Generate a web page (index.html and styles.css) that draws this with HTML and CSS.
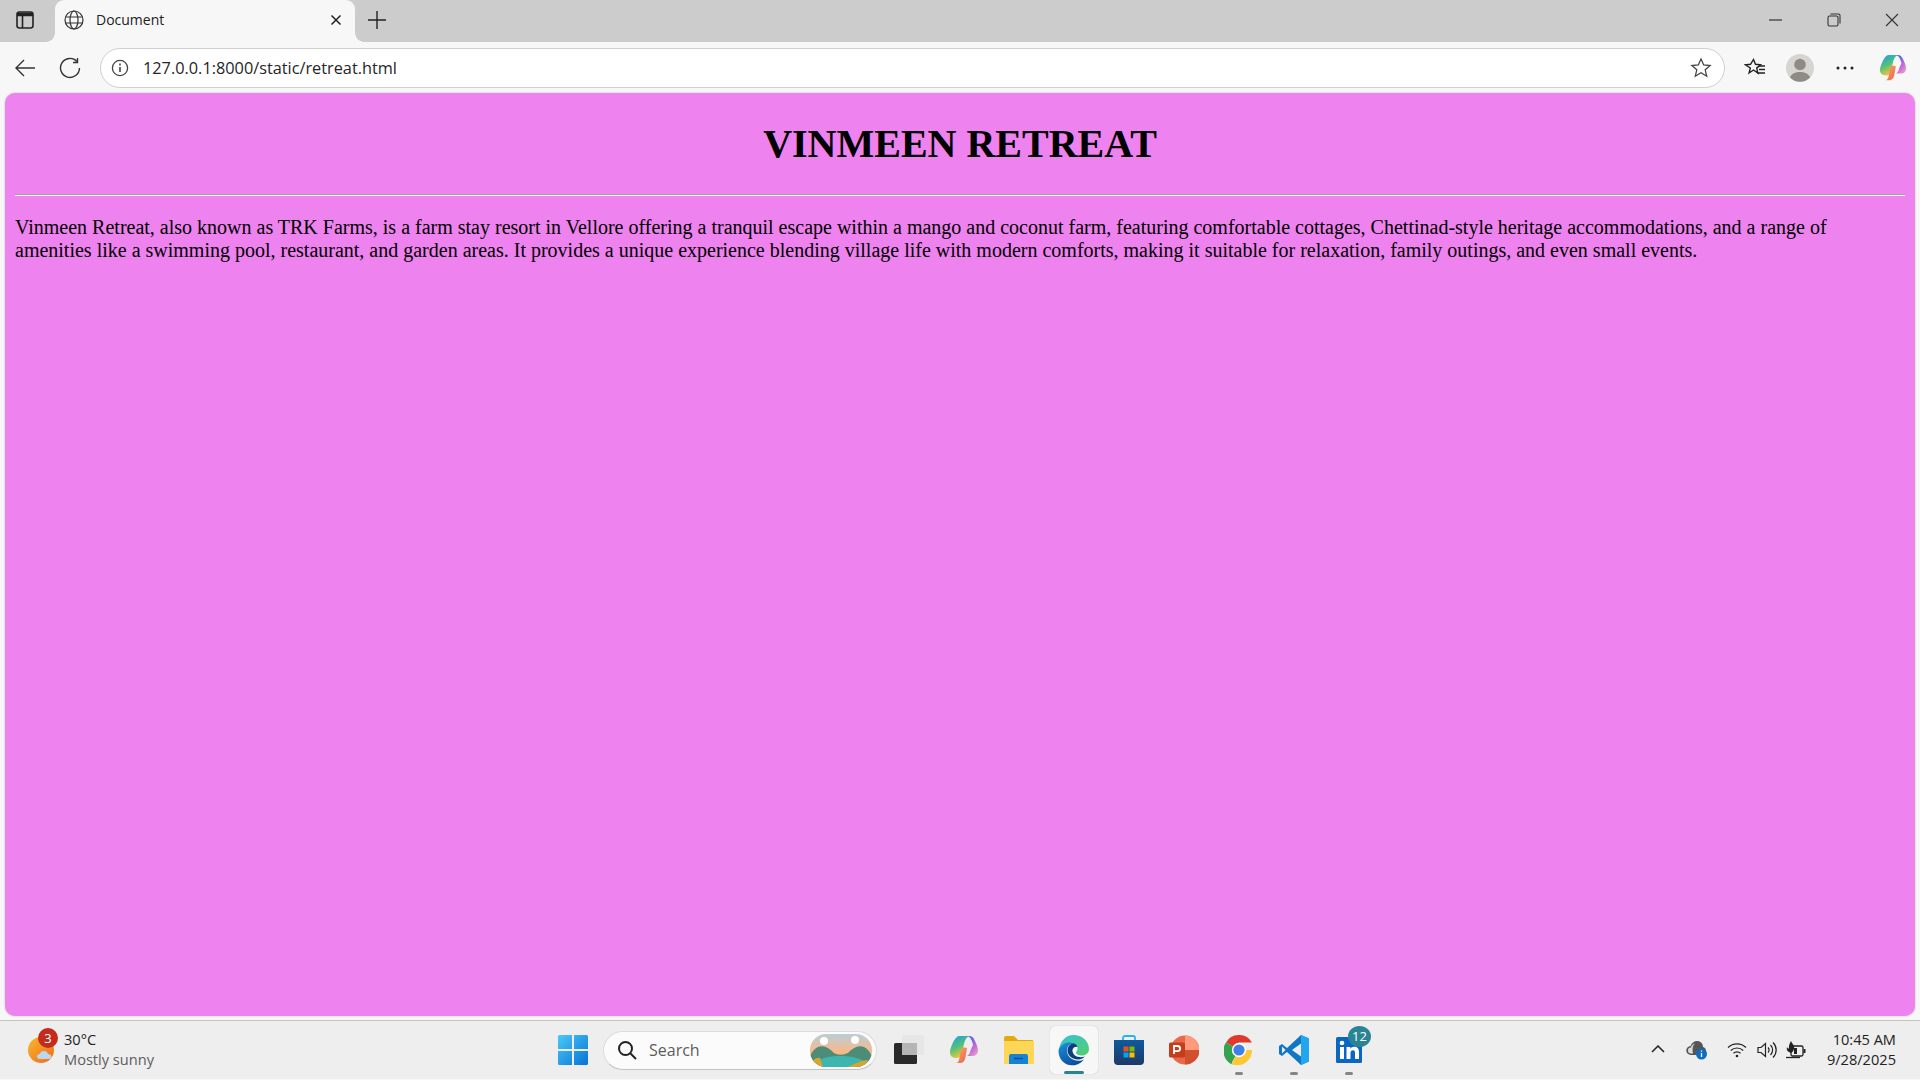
FILE: index.html
```html
<!DOCTYPE html>
<html lang="en">
<head>
  <meta charset="UTF-8">
  <title>Document</title>
  <link rel="stylesheet" href="styles.css">
</head>
<body>
  <div class="tabstrip">
    <svg class="sidebar-icon" width="20" height="20" viewBox="0 0 20 20" fill="none" stroke="#222" stroke-width="1.6"><rect x="2" y="2" width="16" height="16" rx="2.5"/><path d="M2 4.5h16" stroke-width="3.5"/><path d="M7.5 6v12"/></svg>
    <div class="tab">
      <svg width="20" height="20" viewBox="0 0 20 20" fill="none" stroke="#333" stroke-width="1.2"><circle cx="10" cy="10" r="9"/><ellipse cx="10" cy="10" rx="4" ry="9"/><path d="M1.6 7h16.8M1.6 13h16.8"/></svg>
      <span class="tab-title">Document</span>
      <svg class="tab-close" width="12" height="12" viewBox="0 0 12 12" stroke="#222" stroke-width="1.5"><path d="M1.5 1.5l9 9M10.5 1.5l-9 9"/></svg>
    </div>
    <svg class="new-tab" width="18" height="18" viewBox="0 0 18 18" stroke="#222" stroke-width="1.4"><path d="M9 0v18M0 9h18"/></svg>
    <div class="window-controls">
      <svg width="14" height="14" viewBox="0 0 14 14" stroke="#333" stroke-width="1.2"><path d="M0 7h13"/></svg>
      <svg width="14" height="14" viewBox="0 0 14 14" fill="none" stroke="#333" stroke-width="1.1"><rect x="1" y="3" width="10" height="10" rx="1.5"/><path d="M3.5 1h8a1.5 1.5 0 0 1 1.5 1.5v8"/></svg>
      <svg width="14" height="14" viewBox="0 0 14 14" stroke="#333" stroke-width="1.1"><path d="M1 1l12 12M13 1L1 13"/></svg>
    </div>
  </div>

  <div class="toolbar">
    <svg width="22" height="22" viewBox="0 0 22 22" fill="none" stroke="#333" stroke-width="1.4"><path d="M21 11H2M10 3l-8 8 8 8"/></svg>
    <svg class="reload" width="22" height="22" viewBox="0 0 22 22" fill="none" stroke="#333" stroke-width="1.4"><path d="M18 4.5A9.5 9.5 0 1 0 20.5 11"/><path d="M18.5 1v4.5H14"/></svg>
    <div class="address">
      <svg width="18" height="18" viewBox="0 0 18 18" fill="none" stroke="#444" stroke-width="1.3"><circle cx="9" cy="9" r="7.6"/><path d="M9 8v5" stroke-width="1.6"/><path d="M9 4.6v1.8" stroke-width="1.6"/></svg>
      <span class="url">127.0.0.1:8000/static/retreat.html</span>
      <svg class="star" width="22" height="22" viewBox="0 0 22 22" fill="none" stroke="#444" stroke-width="1.3"><path d="M11 2l2.7 6 6.4.6-4.900 4.200 1.500 6.400L11 15.800l-5.700 3.400 1.500-6.400L1.900 8.600 8.300 8z"/></svg>
    </div>
    <svg class="fav" width="22" height="22" viewBox="0 0 22 22" fill="none" stroke="#222" stroke-width="1.4"><path d="M9.5 2.500l2 4.800 5 .5-3.800 3.300 1.200 5L9.500 13l-4.400 3 1.200-5L1.500 7.800l5-.5z"/><path d="M15 9h6M15 12.500h6M13.500 16h7.500"/></svg>
    <svg class="avatar" width="28" height="28" viewBox="0 0 28 28"><circle cx="14" cy="14" r="14" fill="#d6d5d1"/><circle cx="14" cy="10.5" r="5.8" fill="#8e8b87"/><path d="M4 23.500c1.500-4 5.500-5.500 10-5.500s8.500 1.500 10 5.500a14 14 0 0 1-20 0z" fill="#8e8b87"/></svg>
    <svg class="dots" width="18" height="4" viewBox="0 0 18 4" fill="#222"><circle cx="2" cy="2" r="1.5"/><circle cx="9" cy="2" r="1.5"/><circle cx="16" cy="2" r="1.5"/></svg>
    <svg class="copilot" width="28" height="28" viewBox="0 0 30 30">
      <defs>
        <linearGradient id="cop1" x1="0" y1="0" x2="0.4" y2="1"><stop offset="0" stop-color="#1e9bf0"/><stop offset="0.55" stop-color="#4fc27a"/><stop offset="1" stop-color="#f2c53d"/></linearGradient>
        <linearGradient id="cop2" x1="0.2" y1="0" x2="0.8" y2="1"><stop offset="0" stop-color="#3a5ff0"/><stop offset="0.6" stop-color="#c46ad8"/><stop offset="1" stop-color="#e9a0c8"/></linearGradient>
        <linearGradient id="cop3" x1="0" y1="0" x2="1" y2="1"><stop offset="0" stop-color="#f7b24a"/><stop offset="1" stop-color="#ef5a63"/></linearGradient>
      </defs>
      <path d="M10 1h10c-2 1-3.500 3-4.500 6l-3 12c-.7 2.500-2 4-5 4C3 23 1 20.500 1 17.500 1 13 6 1 10 1z" fill="url(#cop1)"/>
      <path d="M18 1h2c2.500 0 4.500 1.500 5.500 4 1.500 3 3.500 7 3.500 10.500 0 3-2 5.500-5 5.500h-6c2-1 3-3 3.500-5.500L24 10c-1-5-3-9-6-9z" fill="url(#cop2)"/>
      <path d="M11 19l2-7 5 1-1.500 9c-.5 3-2 6-5 6H7c3 0 3.500-5 4-9z" fill="url(#cop3)"/>
    </svg>
  </div>

  <main class="viewport">
    <div class="page">
      <h1>VINMEEN RETREAT</h1>
      <hr>
      <p>Vinmeen Retreat, also known as TRK Farms, is a farm stay resort in Vellore offering a tranquil escape within a mango and coconut farm, featuring comfortable cottages, Chettinad-style heritage accommodations, and a range of amenities like a swimming pool, restaurant, and garden areas. It provides a unique experience blending village life with modern comforts, making it suitable for relaxation, family outings, and even small events.</p>
    </div>
  </main>

  <footer class="taskbar">
    <div class="weather">
      <div class="weather-icon">
        <svg width="30" height="30" viewBox="0 0 30 30">
          <defs><linearGradient id="sun" x1="0" y1="0" x2="1" y2="1"><stop offset="0" stop-color="#f6b92c"/><stop offset="1" stop-color="#ee6a1f"/></linearGradient></defs>
          <circle cx="14" cy="15" r="13" fill="url(#sun)"/>
          <path d="M13 24c-2 0-3-1-3-2.500s1.200-2.500 2.800-2.500c.7-2 2.200-3 4.200-3s3.500 1.200 4 3c2 0 3.500 1.200 3.500 2.700S23 24 21 24z" fill="#bcd6f2"/>
        </svg>
        <span class="weather-badge">3</span>
      </div>
      <div class="weather-text">
        <div class="temp">30°C</div>
        <div class="sky">Mostly sunny</div>
      </div>
    </div>

    <div class="task-icons">
      <svg class="start" width="30" height="30" viewBox="0 0 30 30">
        <defs><linearGradient id="win" x1="0" y1="0" x2="1" y2="1"><stop offset="0" stop-color="#4cc8f8"/><stop offset="1" stop-color="#0673d4"/></linearGradient></defs>
        <path d="M0 1.500A1.500 1.500 0 0 1 1.500 0H14v14H0zM16 0h12.500A1.500 1.500 0 0 1 30 1.500V14H16zM0 16h14v14H1.500A1.500 1.500 0 0 1 0 28.500zM16 16h14v12.500a1.500 1.500 0 0 1-1.500 1.500H16z" fill="url(#win)"/>
      </svg>
      <div class="search">
        <svg width="20" height="20" viewBox="0 0 20 20" fill="none" stroke="#222" stroke-width="2"><circle cx="8.5" cy="8.5" r="6.5"/><path d="M13.500 13.500L19 19"/></svg>
        <span class="search-label">Search</span>
        <svg class="search-art" width="62" height="33" viewBox="0 0 62 33">
          <defs>
            <linearGradient id="sky" x1="0" y1="0" x2="0" y2="1"><stop offset="0" stop-color="#b8cfd8"/><stop offset="0.5" stop-color="#f6b98f"/><stop offset="1" stop-color="#f9a95f"/></linearGradient>
            <clipPath id="pill"><rect x="0" y="0" width="62" height="33" rx="16"/></clipPath>
          </defs>
          <g clip-path="url(#pill)">
            <rect width="62" height="33" fill="url(#sky)"/>
            <circle cx="14" cy="7" r="4" fill="#fff"/><circle cx="45" cy="6" r="4" fill="#fff"/>
            <path d="M0 22c6-12 14-12 22-5 3 5 14 5 18 0 8-7 16-7 22 5v11H0z" fill="#4d8c76"/>
            <path d="M0 33c6-9 20-11 30-11s24 2 32 11z" fill="#3fb5b0"/>
            <path d="M0 32c2-6 6-9 10-8l3 9zM38 33c6-3 14-7 20-7l-4 7z" fill="#d9a52b"/>
          </g>
        </svg>
      </div>
      <svg class="task-view" width="30" height="30" viewBox="0 0 30 30"><rect x="0" y="8" width="23" height="21" rx="1.5" fill="#2a2a2a"/><rect x="8" y="0" width="22" height="20" rx="1.5" fill="#e4e4e4" opacity="0.85"/><rect x="8" y="8" width="15" height="12" fill="#b5b5b5"/></svg>
      <span class="app">
        <svg width="30" height="30" viewBox="0 0 30 30">
          <defs>
            <linearGradient id="cop4" x1="0" y1="0" x2="0.4" y2="1"><stop offset="0" stop-color="#1e9bf0"/><stop offset="0.55" stop-color="#4fc27a"/><stop offset="1" stop-color="#f2c53d"/></linearGradient>
            <linearGradient id="cop5" x1="0.2" y1="0" x2="0.8" y2="1"><stop offset="0" stop-color="#3a5ff0"/><stop offset="0.6" stop-color="#c46ad8"/><stop offset="1" stop-color="#e9a0c8"/></linearGradient>
            <linearGradient id="cop6" x1="0" y1="0" x2="1" y2="1"><stop offset="0" stop-color="#f7b24a"/><stop offset="1" stop-color="#ef5a63"/></linearGradient>
          </defs>
          <path d="M10 1h10c-2 1-3.500 3-4.500 6l-3 12c-.7 2.500-2 4-5 4C3 23 1 20.500 1 17.500 1 13 6 1 10 1z" fill="url(#cop4)"/>
          <path d="M18 1h2c2.500 0 4.500 1.500 5.500 4 1.500 3 3.500 7 3.500 10.500 0 3-2 5.500-5 5.500h-6c2-1 3-3 3.500-5.500L24 10c-1-5-3-9-6-9z" fill="url(#cop5)"/>
          <path d="M11 19l2-7 5 1-1.500 9c-.5 3-2 6-5 6H7c3 0 3.500-5 4-9z" fill="url(#cop6)"/>
        </svg>
      </span>
      <span class="app">
        <svg width="32" height="30" viewBox="0 0 32 30">
          <path d="M1 3a2 2 0 0 1 2-2h8l4 4h15v6H1z" fill="#e3a90f"/>
          <path d="M1 6h29a1 1 0 0 1 1 1v21a1 1 0 0 1-1 1H2a1 1 0 0 1-1-1z" fill="#fcd757"/>
          <path d="M6 21a2 2 0 0 1 2-2h15a2 2 0 0 1 2 2v8H6z" fill="#1682d4"/>
          <path d="M11 23.500h9" stroke="#0c4f90" stroke-width="1.5"/>
        </svg>
      </span>
      <span class="app app-active">
        <svg width="31" height="31" viewBox="0 0 31 31">
          <defs>
            <linearGradient id="edge1" x1="0" y1="0" x2="1" y2="1"><stop offset="0" stop-color="#36c0d8"/><stop offset="1" stop-color="#54d06a"/></linearGradient>
            <linearGradient id="edge2" x1="0" y1="0" x2="0.6" y2="1"><stop offset="0" stop-color="#1992dd"/><stop offset="1" stop-color="#0b4e9a"/></linearGradient>
          </defs>
          <path d="M15.500 0C24 0 31 6 31 14c0 4-3 6.500-7 6.500-3 0-6-1-6-3 0-1 1.500-1.500 1.500-4 0-3-3-5.500-7-5.500-5 0-9 3-11.500 7C2 6 8 0 15.500 0z" fill="url(#edge1)"/>
          <path d="M.5 15c2-5 6.500-7.500 11-7.500 1.500 0 2.500.3 3.500.8-4 .7-6.500 4-6 8 .6 6 6 9.500 11 9.500 2.500 0 4.500-.5 6-1.500-2.500 3.500-6.500 6-11 6C7 31 0 24 .5 15z" fill="url(#edge2)"/>
          <path d="M15 8.300c-3 .7-5.500 3.500-5.500 7.200 0 5 5 9 10.500 9 3 0 5-1 7-3-2 .6-4 1-6 .6-3.500-.5-6-2.800-6.500-5.600-.3-2 .5-3.200 1.500-4 1-.7 2.500-.5 3.500-1-1-1.800-2.500-3-4.500-3.200z" fill="#0a3f80"/>
        </svg>
        <span class="run-active"></span>
      </span>
      <span class="app">
        <svg width="30" height="30" viewBox="0 0 30 30">
          <defs><linearGradient id="store" x1="0" y1="0" x2="0" y2="1"><stop offset="0" stop-color="#0f5a9e"/><stop offset="1" stop-color="#1d3a66"/></linearGradient></defs>
          <path d="M9 6V3a2 2 0 0 1 2-2h8a2 2 0 0 1 2 2v3" fill="none" stroke="#25b4e8" stroke-width="1.8"/>
          <path d="M0 5h30v21a4 4 0 0 1-4 4H4a4 4 0 0 1-4-4z" fill="url(#store)"/>
          <rect x="9.500" y="11.500" width="5" height="5" fill="#e8501f"/><rect x="15.500" y="11.500" width="5" height="5" fill="#7fba00"/>
          <rect x="9.500" y="17.500" width="5" height="5" fill="#01a4ef"/><rect x="15.500" y="17.500" width="5" height="5" fill="#ffb900"/>
        </svg>
      </span>
      <span class="app">
        <svg width="30" height="30" viewBox="0 0 30 30">
          <circle cx="16" cy="15" r="14.5" fill="#e8694a"/>
          <path d="M16 .5A14.500 14.500 0 0 1 30.500 15H16z" fill="#ff9a7c"/>
          <path d="M16 15h14.500A14.500 14.500 0 0 1 16 29.500z" fill="#d2502f"/>
          <rect x="0" y="7.500" width="16" height="15" rx="1.5" fill="#c43e1c"/>
          <path d="M5 19V11h3.500a2.600 2.600 0 0 1 0 5.200H5" fill="none" stroke="#fff" stroke-width="1.8"/>
        </svg>
      </span>
      <span class="app">
        <svg width="30" height="30" viewBox="0 0 30 30">
          <path d="M15 15L2 7.500A15 15 0 0 1 28 7.500H15z" fill="#e0392c"/>
          <path d="M15 15l-6.500 11.300-1 3A15 15 0 0 1 2 7.500z" fill="#34a24f"/>
          <path d="M15 15h13a15 15 0 0 1-20.500 14.300z" fill="#fcc934"/>
          <circle cx="15" cy="15" r="7.2" fill="#fff"/>
          <circle cx="15" cy="15" r="5.6" fill="#3f7fe8"/>
        </svg>
        <span class="run-dot"></span>
      </span>
      <span class="app">
        <svg width="30" height="30" viewBox="0 0 30 30">
          <path d="M22 0l8 3.500v23L22 30 8 17l-5 4-3-2v-8l3-2 5 4z" fill="#0f77c4"/>
          <path d="M22 0l8 3.500v23L22 30z" fill="#22a6f0"/>
          <path d="M22 8.500L13 15l9 6.500z" fill="#eeeeee"/>
          <path d="M3 11.500L6.500 15 3 18.500z" fill="#eeeeee"/>
        </svg>
        <span class="run-dot"></span>
      </span>
      <span class="app app-linkedin">
        <svg width="26" height="26" viewBox="0 0 26 26">
          <rect width="26" height="26" rx="1.5" fill="#0b66c2"/>
          <rect x="4" y="10" width="4" height="12" fill="#fff"/><circle cx="6" cy="6" r="2.3" fill="#fff"/>
          <path d="M10.500 10h3.800v1.800c.7-1.200 2-2.100 4-2.100 3.600 0 4.700 2.200 4.700 5.800V22h-4v-5.800c0-1.700-.4-3-2-3s-2.500 1.300-2.500 3V22h-4z" fill="#fff"/>
        </svg>
        <span class="count-badge">12</span>
        <span class="run-dot"></span>
      </span>
    </div>

    <div class="tray">
      <svg class="chevron" width="14" height="8" viewBox="0 0 14 8" fill="none" stroke="#222" stroke-width="1.5"><path d="M1 7l6-6 6 6"/></svg>
      <span class="tray-cloud">
        <svg width="22" height="20" viewBox="0 0 22 20"><path d="M5 15a4.500 4.500 0 0 1-.5-9C5.500 3 8 1 11 1c3.500 0 6 2.500 6 6 2 .5 3 2 3 4s-1.500 4-3.500 4z" fill="#555"/><path d="M5 13.500a3 3 0 0 1 0-6c.5-2 2-3.500 4-4-2 1.500-3 5-2 10z" fill="#ddd"/><circle cx="15.5" cy="14" r="5.5" fill="#0f6cbd"/><path d="M15.500 13v4M15.500 10.500v1.200" stroke="#fff" stroke-width="1.3"/></svg>
      </span>
      <svg class="tray-wifi" width="20" height="16" viewBox="0 0 20 16" fill="none" stroke="#222" stroke-width="1.2"><path d="M1 5.500a13 13 0 0 1 18 0M3.800 8.500a9 9 0 0 1 12.400 0M6.500 11.300a5 5 0 0 1 7 0"/><circle cx="10" cy="14" r="1.3" fill="#222" stroke="none"/></svg>
      <svg class="tray-sound" width="20" height="18" viewBox="0 0 20 18" fill="none" stroke="#222" stroke-width="1.2"><path d="M1 6.500v5h3l4.500 4V2.500L4 6.500z"/><path d="M11 6.500a3.500 3.500 0 0 1 0 5M13.500 4a7 7 0 0 1 0 10M16 1.500a10.500 10.500 0 0 1 0 15"/></svg>
      <svg class="tray-battery" width="20" height="18" viewBox="0 0 20 18"><rect x="5" y="5" width="12" height="10" rx="1.5" fill="none" stroke="#222" stroke-width="1.3"/><rect x="17.5" y="8" width="2" height="4" rx="0.5" fill="#222"/><path d="M5 0c1 3 4 4 3 8-.5 2-1.500 3-3 4C2 11 0 9 1 6c.5 1 1 1.500 2 1.500C2.500 4 4 2 5 0z" fill="#222"/><path d="M0 16.500h14" stroke="#222" stroke-width="1.3"/><rect x="8" y="7" width="3" height="6" fill="#222"/></svg>
      <div class="clock">
        <div>10:45 AM</div>
        <div>9/28/2025</div>
      </div>
    </div>
  </footer>
</body>
</html>
```

FILE: styles.css
```css
html, body {
  height: 100%;
}
body {
  margin: 0;
  display: flex;
  flex-direction: column;
  height: 1080px;
  overflow: hidden;
  background-color: #f7f7f7;
  font-family: "Open Sans", "Noto Sans", sans-serif;
  color: #222;
}
svg {
  display: block;
  flex: none;
}

/* browser tabs */
.tabstrip {
  display: flex;
  align-items: center;
  height: 42px;
  background-color: #cccccc;
  flex: none;
}
.sidebar-icon {
  margin-left: 15px;
  margin-right: 20px;
  margin-top: -2px;
}
.tab {
  position: relative;
  display: flex;
  align-items: center;
  align-self: stretch;
  width: 300px;
  box-sizing: border-box;
  padding: 0 13px 3px 9px;
  background-color: #f7f7f7;
  border-radius: 9px 9px 0 0;
}
.tab::before, .tab::after {
  content: "";
  position: absolute;
  bottom: 0;
  width: 9px;
  height: 9px;
  background: radial-gradient(circle at 0 0, #cccccc 8.5px, #f7f7f7 9px);
}
.tab::before {
  left: -9px;
}
.tab::after {
  right: -9px;
  background: radial-gradient(circle at 100% 0, #cccccc 8.5px, #f7f7f7 9px);
}
.tab-title {
  margin-left: 12px;
  font-size: 14px;
  flex: 1;
}
.new-tab {
  margin-left: 13px;
  margin-top: -3px;
}
.window-controls {
  display: flex;
  align-items: center;
  gap: 44px;
  margin-left: auto;
  margin-right: 21px;
  margin-top: -3px;
}

/* address bar */
.toolbar {
  display: flex;
  align-items: center;
  height: 51px;
  flex: none;
  box-sizing: border-box;
}
.toolbar > svg:first-child {
  margin-left: 14px;
}
.reload {
  margin-left: 23px;
}
.address {
  display: flex;
  align-items: center;
  width: 1625px;
  height: 40px;
  box-sizing: border-box;
  margin-left: 19px;
  padding: 0 12px 0 10px;
  background-color: #ffffff;
  border: 1px solid #cfcfcf;
  border-radius: 20px;
}
.url {
  margin-left: 14px;
  font-size: 16.3px;
  color: #262626;
  flex: 1;
}
.fav {
  margin-left: 19px;
}
.avatar {
  margin-left: 20px;
}
.dots {
  margin-left: 22px;
}
.copilot {
  margin-left: 25px;
}

/* page area */
.viewport {
  flex: none;
  height: 923px;
  margin: 0 5px;
  overflow: hidden;
  background-color: violet;
  border-radius: 10px;
  box-shadow: 0 0 2px rgba(0, 0, 0, 0.25);
  font-family: "Liberation Serif", serif;
  font-size: 20px;
  color: #000;
}
.page {
  margin: 0 10px;
}
h1 {
  margin: 27.8px 0 26.8px;
  font-size: 40px;
  line-height: 46px;
  text-align: center;
}
hr {
  margin: 10px 0;
  border: 0;
  border-top: 1px solid #a0a0a0;
  border-bottom: 1px solid #eeeeee;
}
p {
  margin: 20px 0;
  line-height: 23px;
}

/* windows taskbar */
.taskbar {
  display: flex;
  align-items: center;
  height: 59px;
  margin-top: 4px;
  flex: none;
  background-color: #eeeeee;
  border-top: 1px solid #c4c4c4;
  box-sizing: border-box;
}
.weather {
  display: flex;
  align-items: center;
  width: 558px;
  padding-left: 27px;
  box-sizing: border-box;
  flex: none;
}
.weather-icon {
  position: relative;
  width: 30px;
  height: 30px;
}
.weather-badge {
  position: absolute;
  top: -7px;
  left: 11px;
  width: 20px;
  height: 20px;
  border-radius: 50%;
  background-color: #c42b1c;
  color: #fff;
  font-size: 13px;
  line-height: 20px;
  text-align: center;
}
.weather-text {
  margin-left: 7px;
  margin-top: -2px;
  font-size: 14.6px;
  line-height: 20px;
}
.sky {
  color: #5d5d5d;
}
.task-icons {
  display: flex;
  align-items: center;
}
.search {
  display: flex;
  align-items: center;
  width: 274px;
  height: 39px;
  box-sizing: border-box;
  margin-left: 15px;
  padding: 0 4px 0 13px;
  background-color: #fbfbfb;
  border: 1px solid #dcdcdc;
  border-bottom-color: #c2c2c2;
  border-radius: 20px;
}
.search-label {
  margin-left: 12px;
  font-size: 16px;
  color: #5d5d5d;
  flex: 1;
}
.task-view {
  margin-left: 17px;
  margin-right: 12px;
}
.app {
  position: relative;
  display: flex;
  align-items: center;
  justify-content: center;
  width: 55px;
  height: 48px;
}
.app-active {
  width: 48px;
  margin: 0 3.5px;
  background-color: #f7f7f7;
  border-radius: 5px;
  box-shadow: 0 0 1px rgba(0, 0, 0, 0.3);
}
.run-active, .run-dot {
  position: absolute;
  bottom: 0;
  left: 50%;
  height: 3px;
  border-radius: 2px;
  transform: translateX(-50%);
}
.run-active {
  width: 20px;
  background-color: #2a8494;
}
.run-dot {
  bottom: -1px;
  width: 8px;
  background-color: #858585;
}
.count-badge {
  position: absolute;
  top: 0;
  right: 5px;
  width: 23px;
  height: 21px;
  border-radius: 50%;
  background-color: #2a8494;
  color: #fff;
  font-size: 13px;
  line-height: 21px;
  text-align: center;
}
.tray {
  display: flex;
  align-items: center;
  margin-left: auto;
  padding-right: 24px;
}
.tray-cloud {
  margin-left: 21px;
}
.tray-wifi {
  margin-left: 19px;
}
.tray-sound {
  margin-left: 10px;
}
.tray-battery {
  margin-left: 9px;
}
.chevron {
  margin-top: -2px;
}
.clock {
  margin-left: 21px;
  margin-top: -2px;
  font-size: 14.6px;
  line-height: 20px;
  text-align: right;
}
```
